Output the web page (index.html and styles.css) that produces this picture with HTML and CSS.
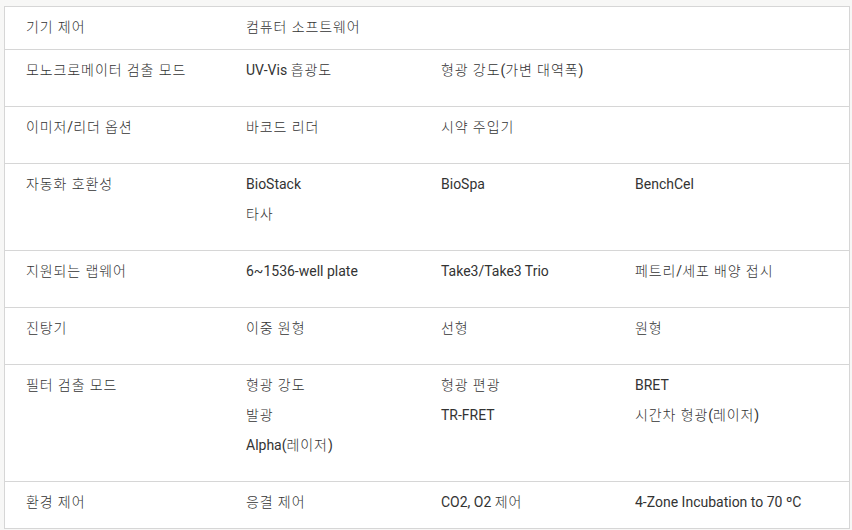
FILE: index.html
```html
<!DOCTYPE html>
<html lang="ko">
<head>
<meta charset="utf-8">
<title>사양</title>
<link rel="stylesheet" href="styles.css">
</head>
<body>
<div class="spec">
  <div class="row row-first">
    <div class="cell"><p><span class="ko">기기 제어</span></p></div>
    <div class="cell"><p><span class="ko">컴퓨터 소프트웨어</span></p></div>
    <div class="cell"></div>
    <div class="cell"></div>
  </div>
  <div class="row">
    <div class="cell"><p><span class="ko">모노크로메이터 검출 모드</span></p></div>
    <div class="cell"><p>UV-Vis <span class="ko">흡광도</span></p></div>
    <div class="cell"><p><span class="ko">형광 강도</span>(<span class="ko">가변 대역폭</span>)</p></div>
    <div class="cell"></div>
  </div>
  <div class="row">
    <div class="cell"><p><span class="ko">이미저</span>/<span class="ko">리더 옵션</span></p></div>
    <div class="cell"><p><span class="ko">바코드 리더</span></p></div>
    <div class="cell"><p><span class="ko">시약 주입기</span></p></div>
    <div class="cell"></div>
  </div>
  <div class="row">
    <div class="cell"><p><span class="ko">자동화 호환성</span></p></div>
    <div class="cell"><p>BioStack</p><p><span class="ko">타사</span></p></div>
    <div class="cell"><p>BioSpa</p></div>
    <div class="cell"><p>BenchCel</p></div>
  </div>
  <div class="row">
    <div class="cell"><p><span class="ko">지원되는 랩웨어</span></p></div>
    <div class="cell"><p>6~1536-well plate</p></div>
    <div class="cell"><p>Take3/Take3 Trio</p></div>
    <div class="cell"><p><span class="ko">페트리</span>/<span class="ko">세포 배양 접시</span></p></div>
  </div>
  <div class="row">
    <div class="cell"><p><span class="ko">진탕기</span></p></div>
    <div class="cell"><p><span class="ko">이중 원형</span></p></div>
    <div class="cell"><p><span class="ko">선형</span></p></div>
    <div class="cell"><p><span class="ko">원형</span></p></div>
  </div>
  <div class="row">
    <div class="cell"><p><span class="ko">필터 검출 모드</span></p></div>
    <div class="cell"><p><span class="ko">형광 강도</span></p><p><span class="ko">발광</span></p><p>Alpha(<span class="ko">레이저</span>)</p></div>
    <div class="cell"><p><span class="ko">형광 편광</span></p><p>TR-FRET</p></div>
    <div class="cell"><p>BRET</p><p><span class="ko">시간차 형광</span>(<span class="ko">레이저</span>)</p></div>
  </div>
  <div class="row row-last">
    <div class="cell"><p><span class="ko">환경 제어</span></p></div>
    <div class="cell"><p><span class="ko">응결 제어</span></p></div>
    <div class="cell"><p>CO2, O2 <span class="ko">제어</span></p></div>
    <div class="cell"><p>4-Zone Incubation to 70 ºC</p></div>
  </div>
</div>
</body>
</html>
```

FILE: styles.css
```css
html {
  background: #f7f7f6;
}
body {
  margin: 0;
  padding: 6px 2px 0 4px;
  font-family: Roboto, "Noto Sans CJK KR", sans-serif;
  font-size: 14px;
  color: #333;
}
.spec {
  background: #fff;
  border: 1px solid #d6d6d6;
  border-bottom: none;
  width: 844px;
}
.row {
  display: grid;
  grid-template-columns: 220px 195px 194px 1fr;
  border-bottom: 1px solid #d6d6d6;
  padding: 10px 0 16px;
}
.row-first {
  padding-bottom: 2px;
}
.row-last {
  padding-bottom: 6px;
}
.cell {
  padding-left: 21px;
}
.cell p {
  margin: 0 0 10px;
  line-height: 20px;
  white-space: nowrap;
}
.ko {
  letter-spacing: 0.9px;
  font-weight: 300;
}
```
